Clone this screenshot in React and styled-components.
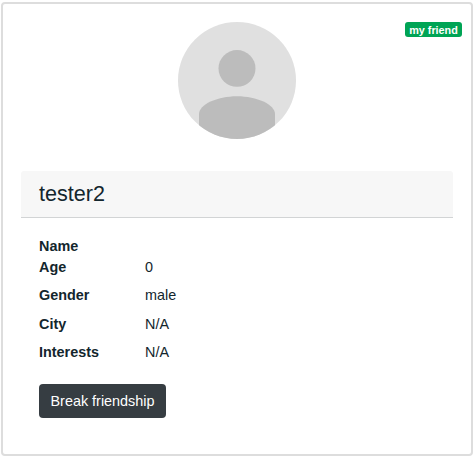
import React from "react";
import styled, { createGlobalStyle } from "styled-components";

const GlobalStyle = createGlobalStyle`
  *, *::before, *::after { box-sizing: border-box; }
  html, body { margin: 0; background: #fff; }
  body {
    color: #13262d;
    font-family: "Liberation Sans", Arial, sans-serif;
    font-size: 14.4px;
    line-height: 21.3px;
    overflow: hidden;
  }
`;

const Card = styled.main`
  position: relative;
  display: flex;
  flex-direction: column;
  width: 472px;
  height: 454px;
  margin: 2px 0 0 1px;
  padding: 18px;
  border: 2px solid #dddddd;
  border-radius: 4px;
`;

const Badge = styled.span`
  position: absolute;
  top: 18px;
  right: 9px;
  width: 57px;
  height: 15px;
  border-radius: 3px;
  background: #00a455;
  color: #fff;
  font-size: 10.8px;
  font-weight: 700;
  line-height: 16px;
  text-align: center;
  white-space: nowrap;
`;

const Avatar = styled.svg`
  display: block;
  flex: none;
  width: 118px;
  height: 117px;
  margin: 0 auto 32px;
`;

const Header = styled.header`
  flex: none;
  width: 432px;
  height: 47px;
  padding: 0 18px;
  border-bottom: 1px solid #d2d4d5;
  border-radius: 3px 3px 0 0;
  background: #f7f7f7;
`;

const Title = styled.h1`
  margin: 0;
  font-size: 21.6px;
  font-weight: 400;
  line-height: 45px;
`;

const Body = styled.section`
  padding: 17.6px 18px 0;
`;

const Details = styled.dl`
  margin: 0 0 13.5px;
`;

const Row = styled.div`
  display: grid;
  grid-template-columns: 106px 1fr;
  height: ${({ $compact }) => ($compact ? "21.3px" : "28.4px")};
`;

const Term = styled.dt`
  font-weight: 700;
`;

const Value = styled.dd`
  margin: 0;
`;

const Button = styled.button`
  display: block;
  width: 127px;
  height: 34px;
  padding: 2px 0 0;
  border: 0;
  border-radius: 4px;
  background: #363d42;
  color: #fff;
  font: inherit;
  white-space: nowrap;
`;

const details = [
  ["Name", ""],
  ["Age", "0"],
  ["Gender", "male"],
  ["City", "N/A"],
  ["Interests", "N/A"],
];

export default function App() {
  return (
    <>
      <GlobalStyle />
      <Card>
        <Badge>my friend</Badge>
        <Avatar viewBox="0 0 118 117" role="img" aria-label="Profile picture">
          <clipPath id="avatar">
            <ellipse cx="59" cy="58.5" rx="59" ry="58.5" />
          </clipPath>
          <g clipPath="url(#avatar)">
            <rect width="118" height="117" fill="#e0e0e0" />
            <ellipse cx="59" cy="46.4" rx="18.5" ry="18.4" fill="#bcbcbc" />
            <path d="M21 117V92C21 82.5 39 74.2 59 74.2S97 82.5 97 92V117Z" fill="#bcbcbc" />
          </g>
        </Avatar>
        <Header>
          <Title>tester2</Title>
        </Header>
        <Body>
          <Details>
            {details.map(([term, value]) => (
              <Row key={term} $compact={!value}>
                <Term>{term}</Term>
                <Value>{value}</Value>
              </Row>
            ))}
          </Details>
          <Button type="button">Break friendship</Button>
        </Body>
      </Card>
    </>
  );
}
